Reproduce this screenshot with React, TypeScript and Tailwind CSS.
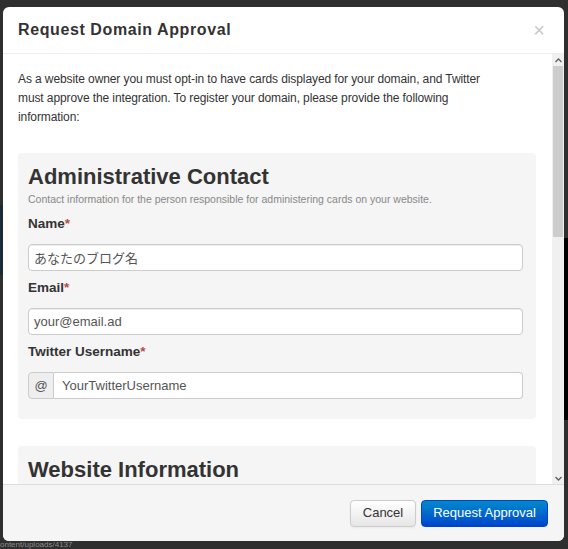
import React from 'react';

const font = { fontFamily: '"Liberation Sans", Arial, "Noto Sans CJK JP", sans-serif' };

const inputClass =
  'block w-full h-[27px] rounded-[4px] border border-[#cccccc] bg-white px-[5px] text-[13px] text-[#555555] shadow-[inset_0_1px_1px_rgba(0,0,0,0.075)] outline-none';

const Label = ({ children }: { children: React.ReactNode }) => (
  <div className="h-[20px] leading-[20px] text-[13.5px] font-bold text-[#333333] mb-[10px]">
    {children}
    <span className="text-[#b94a48]">*</span>
  </div>
);

const Scrollbar = () => (
  <div className="w-[12px] flex flex-col bg-[#f0f0f0]">
    <div className="h-[12px] flex items-center justify-center">
      <svg width="7" height="5" viewBox="0 0 7 5">
        <path d="M0.5 4 L3.5 1 L6.5 4" stroke="#606060" strokeWidth="1.3" fill="none" />
      </svg>
    </div>
    <div className="h-[171px] bg-[#cdcdcd] mx-[1px]" />
    <div className="flex-1" />
    <div className="h-[12px] flex items-center justify-center">
      <svg width="7" height="5" viewBox="0 0 7 5">
        <path d="M0.5 1 L3.5 4 L6.5 1" stroke="#606060" strokeWidth="1.3" fill="none" />
      </svg>
    </div>
  </div>
);

export default function App() {
  return (
    <div className="relative w-[568px] h-[549px] overflow-hidden bg-[#2f2f2f]" style={font}>
      {/* page behind the backdrop */}
      <div className="absolute right-0 top-[238px] w-[6px] h-[182px] bg-black" />
      <div className="absolute left-0 top-[205px] w-[4px] h-[70px] bg-[#1c2a36]" />
      <div className="absolute left-0 top-[541px] text-[8px] leading-[8px] text-[#8a8a8a]">ontent/uploads/4137</div>

      {/* modal */}
      <div className="absolute left-[3px] top-[7px] w-[561px] h-[534px] flex flex-col rounded-[6px] bg-white overflow-hidden">
        <div className="h-[47px] shrink-0 flex items-center justify-between border-b border-[#eeeeee] pl-[15px] pr-[19px]">
          <h3 className="text-[16px] font-bold text-[#333333] tracking-[0.6px]">Request Domain Approval</h3>
          <span className="text-[20px] leading-none text-[#c8c8c8]">×</span>
        </div>

        <div className="flex-1 flex min-h-0">
          <div className="flex-1 overflow-hidden pl-[15px] pr-[16px] pt-[16px]">
            <p className="text-[12px] leading-[19px] tracking-[-0.1px] text-[#333333] mb-[26px]">
              As a website owner you must opt-in to have cards displayed for your domain, and Twitter
              <br />
              must approve the integration. To register your domain, please provide the following
              <br />
              information:
            </p>

            <div className="rounded-[4px] bg-[#f5f5f5] pt-[10px] pb-[20px] pl-[10px] pr-[13px]">
              <h2 className="h-[28px] leading-[28px] text-[22px] font-bold text-[#333333]">
                Administrative Contact
              </h2>
              <div className="h-[16px] leading-[16px] text-[10.5px] text-[#888888] mb-[7px]">
                Contact information for the person responsible for administering cards on your website.
              </div>

              <Label>Name</Label>
              <input className={inputClass} defaultValue="あなたのブログ名" />

              <div className="mt-[7px]">
                <Label>Email</Label>
                <input className={inputClass} defaultValue="your@email.ad" />
              </div>

              <div className="mt-[7px]">
                <Label>Twitter Username</Label>
                <div className="flex h-[27px]">
                  <span className="w-[26px] flex items-center justify-center rounded-l-[4px] border border-[#cccccc] bg-[#eeeeee] text-[13px] text-[#555555]">
                    @
                  </span>
                  <input
                    className="flex-1 h-[27px] rounded-r-[4px] border border-l-0 border-[#cccccc] bg-white px-[8px] text-[13px] text-[#555555] outline-none"
                    defaultValue="YourTwitterUsername"
                  />
                </div>
              </div>
            </div>

            <div className="mt-[27px] rounded-[4px] bg-[#f5f5f5] pt-[10px] pl-[10px] h-[80px]">
              <h2 className="h-[28px] leading-[28px] text-[22px] font-bold text-[#333333]">
                Website Information
              </h2>
            </div>
          </div>
          <Scrollbar />
        </div>

        <div className="h-[57px] shrink-0 flex items-center justify-end gap-[5px] border-t border-[#dddddd] bg-[#f5f5f5] pr-[16px]">
          <button className="h-[27px] w-[66px] rounded-[4px] border border-[#cccccc] bg-gradient-to-b from-white to-[#e6e6e6] text-[13px] text-[#333333] shadow-[inset_0_1px_0_rgba(255,255,255,0.2),0_1px_2px_rgba(0,0,0,0.05)]">
            Cancel
          </button>
          <button className="h-[27px] w-[127px] rounded-[4px] border border-[#0044cc] bg-gradient-to-b from-[#0088cc] to-[#0044cc] text-[13px] text-white">
            Request Approval
          </button>
        </div>
      </div>
    </div>
  );
}
